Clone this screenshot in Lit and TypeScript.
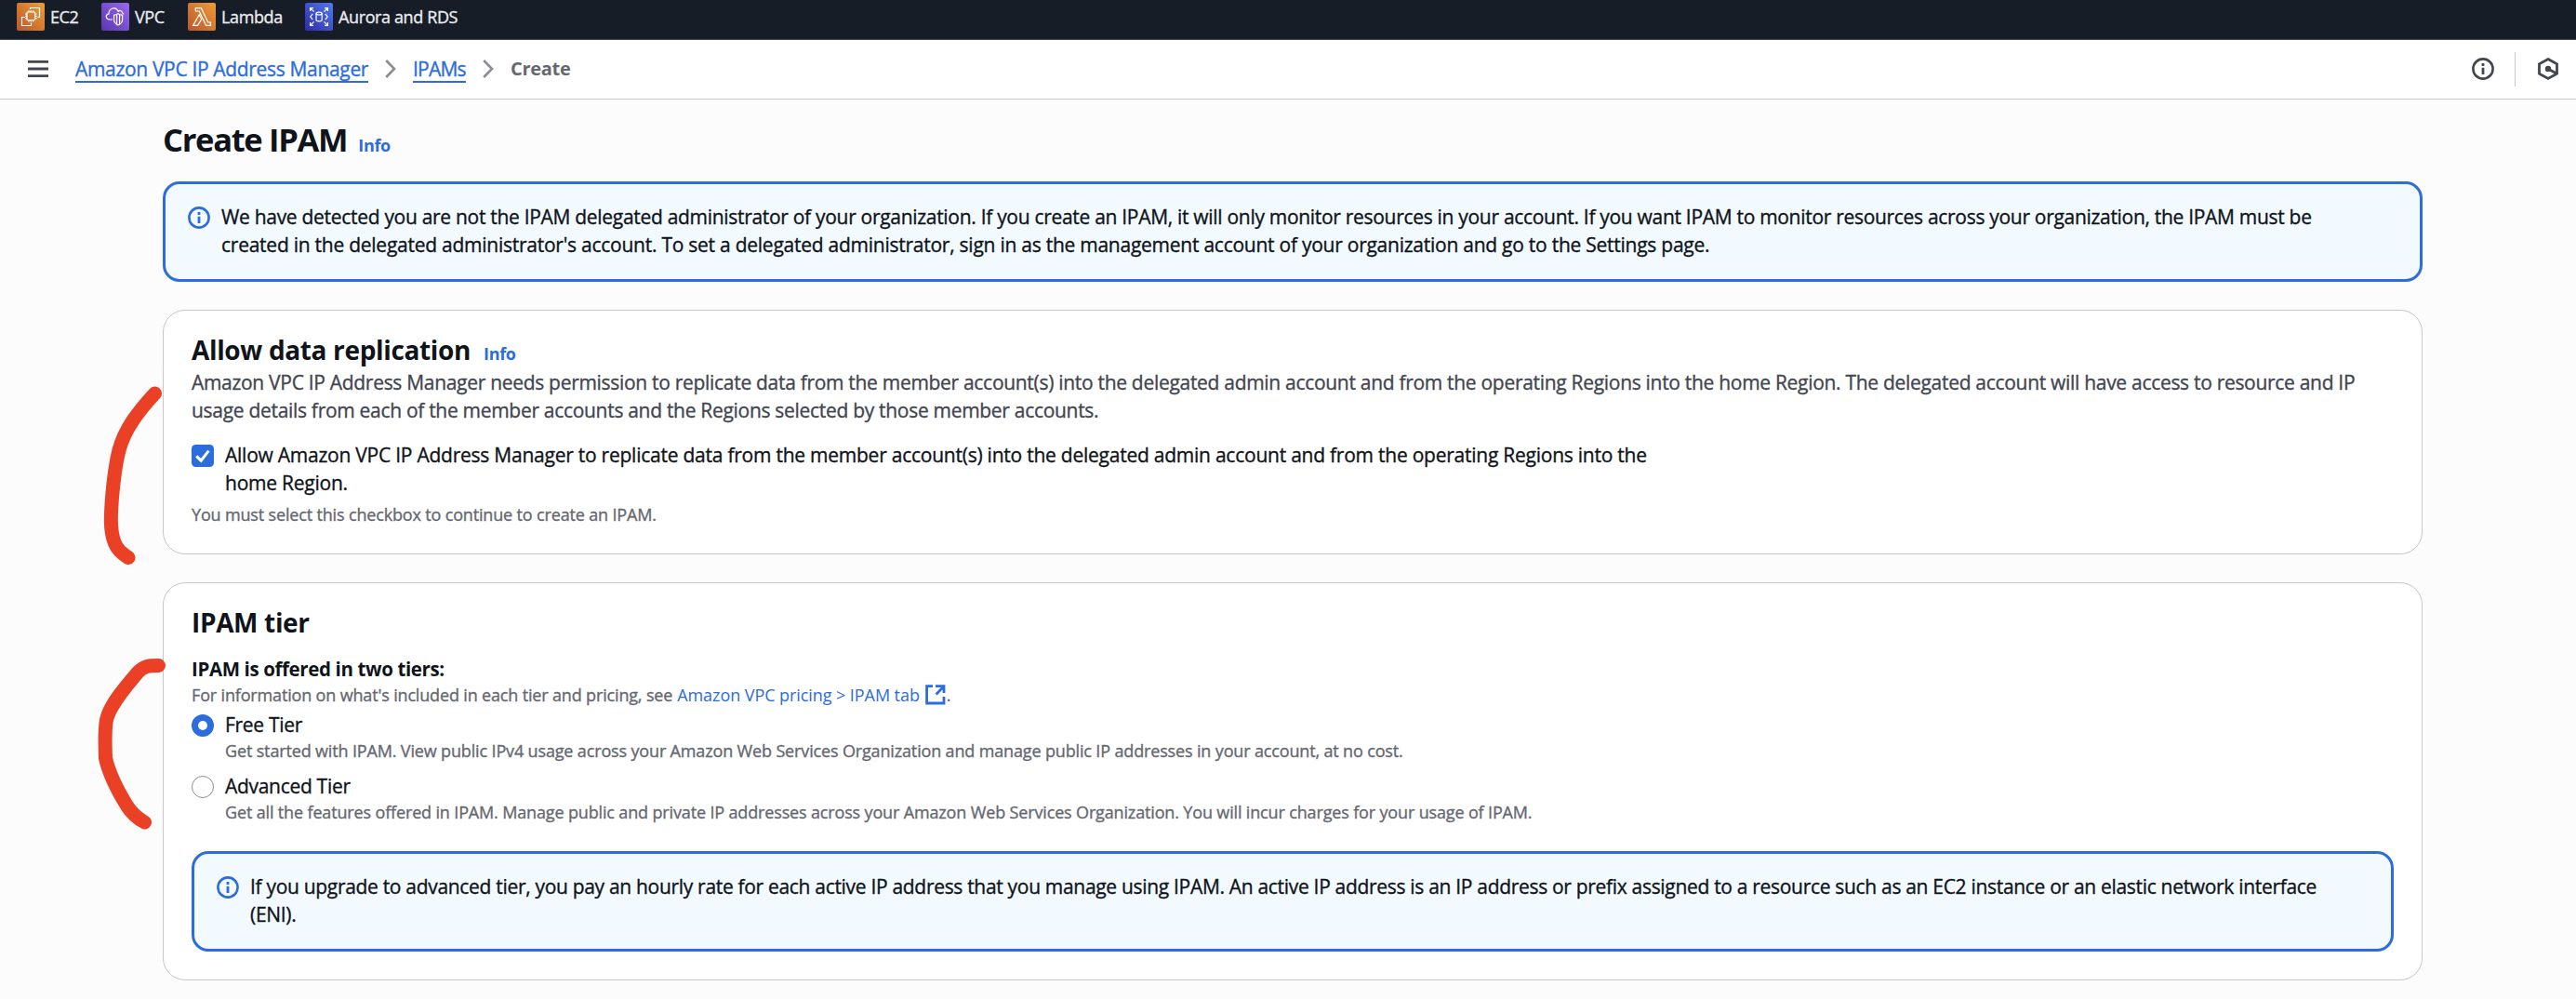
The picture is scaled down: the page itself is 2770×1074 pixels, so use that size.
import { LitElement, html, css, svg } from "lit";
import { customElement, property } from "lit/decorators.js";

const infoIcon = html`<svg class="info-icon" viewBox="0 0 24 24" width="24" height="24" fill="none" stroke="currentColor">
  <circle cx="12" cy="12" r="10.6" stroke-width="2.6"></circle>
  <path d="M12 10.8V18M12 6V9" stroke-width="2.8"></path>
</svg>`;

const chevron = html`<svg class="chevron" viewBox="0 0 12 20" width="12" height="20" fill="none" stroke="#8c8c94" stroke-width="2.6">
  <path d="M1.2 1L10 10L1.2 19"></path>
</svg>`;

const orange = ["#b9572d", "#f09d37"];
const purple = ["#5a36b0", "#9a68f2"];
const blue = ["#2e2ba8", "#5179f3"];

const services = [
  {
    id: "ec2",
    name: "EC2",
    colors: orange,
    glyph: svg`<rect x="11" y="10" width="8.6" height="8.6" rx="0.8"></rect>
      <path d="M13 10V8M15.3 10V8M17.6 10V8M13 20.6V18.6M15.3 20.6V18.6M17.6 20.6V18.6M11 12H9M11 14.3H9M11 16.6H9M21.6 12H19.6M21.6 14.3H19.6M21.6 16.6H19.6"></path>
      <path d="M14.5 7V5.5H24.5V15.5H22.5M9 15.5H5.5V24.5H15.5V21.5"></path>`,
  },
  {
    id: "vpc",
    name: "VPC",
    colors: purple,
    glyph: svg`<path d="M12 18H8.8C4.2 17.6 4.3 12.4 8 11.8C8 5.8 15.6 3.3 18.2 9.2C20 7.6 22.3 8.8 22.6 11L24.3 12.4"></path>
      <path d="M18 11.8C20 12.9 21.5 13.2 22.6 13.3V18.5C22.4 21.5 20.4 23 18 24C15.6 23 13.8 21.5 13.6 18.5V13.3C14.8 13.2 16 12.9 18 11.8Z"></path>
      <path d="M16.6 13V23M19.6 13V23"></path>`,
  },
  {
    id: "lambda",
    name: "Lambda",
    colors: orange,
    glyph: svg`<path d="M8.4 5.7H14.4L21.6 21H24.4V24.4H19.6L12.2 9H8.4Z"></path>
      <path d="M12.3 12.8L5.6 24.4H10.6L14.7 17.6Z"></path>`,
  },
  {
    id: "rds",
    name: "Aurora and RDS",
    colors: blue,
    glyph: svg`<path d="M12 11.6V18.6C12 20.4 18.2 20.4 18.2 18.6V11.6"></path>
      <ellipse cx="15.1" cy="11.6" rx="3.1" ry="1.4"></ellipse>
      <path d="M5.6 9V5.6H9M5.6 5.6L9.6 9.6M21 5.6H24.4V9M24.4 5.6L20.4 9.6M5.6 21V24.4H9M5.6 24.4L9.6 20.4M21 24.4H24.4V21M24.4 24.4L20.4 20.4"></path>
      <path d="M8.2 11.8L5.8 15L8.2 18.2M21.8 11.8L24.2 15L21.8 18.2"></path>`,
  },
];

@customElement("info-alert")
class InfoAlert extends LitElement {
  static styles = css`
    :host {
      display: flex;
      gap: 12px;
      box-sizing: border-box;
      height: 108px;
      padding: 20px 24px 22px;
      border: 3px solid #2c6cdd;
      border-radius: 18px;
      background: #f2faff;
      color: #0f141a;
    }
    .info-icon {
      flex: none;
      margin-top: 4px;
      color: #2c6cdd;
    }
    .text {
      white-space: nowrap;
    }
  `;
  render() {
    return html`${infoIcon}<div class="text"><slot></slot></div>`;
  }
}

@customElement("tier-option")
class TierOption extends LitElement {
  @property() name = "";
  @property({ type: Boolean }) checked = false;

  static styles = css`
    :host {
      display: flex;
      gap: 12px;
    }
    .radio {
      box-sizing: border-box;
      flex: none;
      width: 24px;
      height: 24px;
      margin-top: 4px;
      border: 1.5px solid #8c8c94;
      border-radius: 50%;
      background: #fff;
    }
    .radio.on {
      border: 7px solid #2c6cdd;
    }
    .name {
      color: #0f141a;
    }
    .description {
      margin-top: 1px;
      font-size: 18px;
      line-height: 24px;
      letter-spacing: -0.15px;
      color: #656871;
      white-space: nowrap;
    }
  `;
  render() {
    return html`<span class="radio ${this.checked ? "on" : ""}"></span>
      <div>
        <div class="name">${this.name}</div>
        <div class="description"><slot></slot></div>
      </div>`;
  }
}

@customElement("app-root")
class AppRoot extends LitElement {
  static styles = css`
    :host {
      display: block;
      position: relative;
      box-sizing: border-box;
      height: 1074px;
      overflow: hidden;
      background: #fcfcfd;
      color: #0f141a;
      font: 400 21px/30px "Open Sans", "Noto Sans", sans-serif;
      letter-spacing: -0.3px;
      -webkit-text-stroke: 0.35px currentColor;
    }
    a {
      color: #2c6cdd;
      text-decoration: none;
    }
    .favorites {
      display: grid;
      grid-template-columns: 91px 93px 126px auto;
      box-sizing: border-box;
      height: 43px;
      padding: 3px 18px 0;
      border-bottom: 1px solid #424650;
      background: #161d26;
    }
    .favorite {
      display: flex;
      gap: 6px;
      height: 30px;
      color: #ebebf0;
      font-size: 18px;
      letter-spacing: -0.38px;
      white-space: nowrap;
    }
    .favorite svg {
      border-radius: 2px;
    }
    .toolbar {
      display: flex;
      align-items: center;
      box-sizing: border-box;
      height: 64px;
      padding: 0 19px 1px 30px;
      border-bottom: 1px solid #c6c6cd;
      background: #fff;
      color: #424650;
    }
    .crumbs {
      display: flex;
      align-items: center;
      gap: 18px;
      margin-left: 29px;
    }
    .crumbs a {
      box-sizing: border-box;
      height: 30px;
      border-bottom: 2px solid #2c6cdd;
    }
    .long {
      width: 315px;
      letter-spacing: -0.33px;
      white-space: nowrap;
    }
    .short {
      width: 57px;
      letter-spacing: -0.8px;
    }
    .current {
      font-size: 20px;
      font-weight: 700;
      letter-spacing: -0.3px;
      color: #656871;
    }
    .current,
    h1,
    h2,
    .info,
    .label,
    .pricing {
      -webkit-text-stroke: 0;
    }
    .tools {
      display: flex;
      align-items: center;
      margin-left: auto;
    }
    .divider {
      width: 1px;
      height: 37px;
      margin: 0 24px 0 22px;
      background: #c6c6cd;
    }
    main {
      display: flex;
      flex-direction: column;
      box-sizing: border-box;
      width: 2430px;
      margin-left: 175px;
      padding-top: 20px;
    }
    .title {
      display: flex;
      align-items: baseline;
      gap: 12px;
      margin-bottom: 23px;
    }
    h1,
    h2 {
      margin: 0;
      font-weight: 700;
    }
    h1 {
      font-size: 34.5px;
      line-height: 45px;
      letter-spacing: -1.3px;
    }
    h2 {
      font-size: 28px;
      line-height: 36px;
      letter-spacing: -0.35px;
    }
    .info {
      font-size: 18px;
      line-height: 24px;
      font-weight: 700;
      letter-spacing: -0.35px;
    }
    .card {
      box-sizing: border-box;
      margin-top: 30px;
      padding: 24px 30px 30px;
      border: 1px solid #c6c6cd;
      border-radius: 24px;
      background: #fff;
    }
    .card-title {
      display: flex;
      align-items: baseline;
      gap: 14px;
      height: 36px;
    }
    .description {
      margin-top: 2px;
      color: #424650;
      white-space: nowrap;
    }
    .check {
      display: flex;
      gap: 12px;
      margin-top: 18px;
      letter-spacing: -0.24px;
      white-space: nowrap;
    }
    .check svg {
      flex: none;
      margin-top: 4px;
    }
    .hint {
      font-size: 18px;
      line-height: 24px;
      letter-spacing: -0.16px;
      color: #656871;
      white-space: nowrap;
    }
    .check + .hint {
      margin-top: 7px;
    }
    .label {
      margin-top: 17px;
      font-size: 20.5px;
      font-weight: 700;
      letter-spacing: -0.38px;
    }
    .label + .hint {
      display: flex;
      height: 24px;
      margin-top: 1px;
      margin-bottom: 5px;
    }
    .pricing {
      display: flex;
      gap: 6px;
      margin: 0 1px 0 5px;
      font-weight: 500;
      letter-spacing: -0.07px;
    }
    .pricing svg {
      flex: none;
      margin-top: 1px;
    }
    tier-option + tier-option {
      margin-top: 11px;
    }
    .card info-alert {
      margin-top: 30px;
      letter-spacing: -0.31px;
    }
    .loose {
      letter-spacing: -0.25px;
    }
    .marks {
      position: absolute;
      left: 0;
      top: 0;
      pointer-events: none;
    }
  `;

  render() {
    return html`
      <nav class="favorites">
        ${services.map(
          (s) => html`<div class="favorite">
            <svg viewBox="0 0 30 30" width="30" height="30">
              <defs>
                <linearGradient id=${s.id} x1="0" y1="1" x2="1" y2="0">
                  <stop offset="0" stop-color=${s.colors[0]}></stop>
                  <stop offset="1" stop-color=${s.colors[1]}></stop>
                </linearGradient>
              </defs>
              <rect width="30" height="30" fill="url(#${s.id})"></rect>
              <g fill="none" stroke="#fff" stroke-width="1.2">${s.glyph}</g>
            </svg>
            <span>${s.name}</span>
          </div>`
        )}
      </nav>
      <header class="toolbar">
        <svg viewBox="0 0 22 18" width="22" height="18" stroke="#424650" stroke-width="2.8">
          <path d="M0 1.4H22M0 9H22M0 16.6H22"></path>
        </svg>
        <div class="crumbs">
          <a class="long">Amazon VPC IP Address Manager</a>${chevron}<a class="short">IPAMs</a>${chevron}<span class="current">Create</span>
        </div>
        <div class="tools">
          ${infoIcon}
          <span class="divider"></span>
          <svg viewBox="0 0 22 24" width="22" height="24" fill="none" stroke="#424650" stroke-width="2.8">
            <path d="M11 1.6L20.5 6.8V17.2L11 22.4L1.5 17.2V6.8Z"></path>
            <path d="M11 12L20 17"></path>
            <circle cx="11" cy="12" r="3.2" fill="#424650" stroke="none"></circle>
          </svg>
        </div>
      </header>
      <main>
        <div class="title"><h1>Create IPAM</h1><a class="info">Info</a></div>
        <info-alert>
          We have detected you are not the IPAM delegated administrator of your organization. If you create an IPAM, it will only monitor resources in your account. If you want IPAM to monitor resources across your organization, the IPAM must be<br /><span class="loose">created in the delegated administrator's account. To set a delegated administrator, sign in as the management account of your organization and go to the Settings page.</span>
        </info-alert>
        <section class="card">
          <div class="card-title"><h2>Allow data replication</h2><a class="info">Info</a></div>
          <div class="description">
            Amazon VPC IP Address Manager needs permission to replicate data from the member account(s) into the delegated admin account and from the operating Regions into the home Region. The delegated account will have access to resource and IP<br />usage details from each of the member accounts and the Regions selected by those member accounts.
          </div>
          <div class="check">
            <svg viewBox="0 0 24 24" width="24" height="24">
              <rect width="24" height="24" rx="4.5" fill="#2c6cdd"></rect>
              <path d="M5.2 12.4L10.2 17.2L18.4 6.6" fill="none" stroke="#fff" stroke-width="3"></path>
            </svg>
            <div>Allow Amazon VPC IP Address Manager to replicate data from the member account(s) into the delegated admin account and from the operating Regions into the<br />home Region.</div>
          </div>
          <div class="hint">You must select this checkbox to continue to create an IPAM.</div>
        </section>
        <section class="card">
          <div class="card-title"><h2>IPAM tier</h2></div>
          <div class="label">IPAM is offered in two tiers:</div>
          <div class="hint">
            <span>For information on what's included in each tier and pricing, see</span>
            <a class="pricing">Amazon VPC pricing &gt; IPAM tab
              <svg viewBox="0 0 22 22" width="22" height="22" fill="none" stroke="#2c6cdd" stroke-width="2.8">
                <path d="M8 1.7H1.6V20H20V13M11 1.7H20V9M19.6 2.2L11.6 10.4"></path>
              </svg></a><span>.</span>
          </div>
          <tier-option name="Free Tier" checked>Get started with IPAM. View public IPv4 usage across your Amazon Web Services Organization and manage public IP addresses in your account, at no cost.</tier-option>
          <tier-option name="Advanced Tier">Get all the features offered in IPAM. Manage public and private IP addresses across your Amazon Web Services Organization. You will incur charges for your usage of IPAM.</tier-option>
          <info-alert>
            If you upgrade to advanced tier, you pay an hourly rate for each active IP address that you manage using IPAM. An active IP address is an IP address or prefix assigned to a resource such as an EC2 instance or an elastic network interface<br />(ENI).
          </info-alert>
        </section>
      </main>
      <svg class="marks" width="180" height="1074" fill="none" stroke="#ea4126" stroke-width="15" stroke-linecap="round" stroke-linejoin="round">
        <path d="M166.5 423C149 442 134 461 128 484C124 500 122 517 120.500 535C119 555 118.500 568 122 580C125 590 130 594 138 599.500"></path>
        <path d="M170.500 715.500C159 715.500 155 716 148 723C138 735 118 757 114.500 774C112.500 785 113 803 113.500 815C118 835 127 851 137 867C143 876 148 880 155.500 884"></path>
      </svg>
    `;
  }
}
